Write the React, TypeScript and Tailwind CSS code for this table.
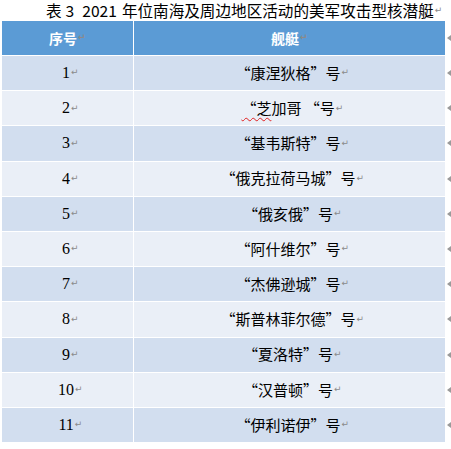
const rows: string[] = [
  "“康涅狄格”号",
  "__CHICAGO__",
  "“基韦斯特”号",
  "“俄克拉荷马城”号",
  "“俄亥俄”号",
  "“阿什维尔”号",
  "“杰佛逊城”号",
  "“斯普林菲尔德”号",
  "“夏洛特”号",
  "“汉普顿”号",
  "“伊利诺伊”号",
];

const cjk = "font-['Noto_Sans_CJK_SC',sans-serif]";

function Mark() {
  return <span className="ml-[1px] font-['DejaVu_Sans',sans-serif] text-[9px] text-[#8a8a8a]">↵</span>;
}

function RowEnd() {
  return (
    <div className="flex w-[5px] items-center justify-end">
      <svg width="4" height="6" viewBox="0 0 4 6">
        <path d="M4 0 L0 3 L4 6 Z" fill="#9a9a9a" />
      </svg>
    </div>
  );
}

export default function App() {
  return (
    <div className="h-[449px] w-[451px] overflow-hidden bg-white">
      <div className={`flex h-[21px] items-center whitespace-nowrap pl-[46px] text-[15.6px] leading-none text-black ${cjk}`}>
        <span>表</span>
        <span className="ml-[4px]">3</span>
        <span className="ml-[8px]">2021</span>
        <span className="ml-[5px]">年位南海及周边地区活动的美军攻击型核潜艇</span>
        <Mark />
      </div>
      <div className="flex flex-col gap-px pl-[2px]">
        <div className="flex h-[34px] gap-px">
          <div className={`flex w-[131px] items-center justify-center bg-[#5b9bd5] text-[14px] font-bold text-white ${cjk}`}>
            序号
            <Mark />
          </div>
          <div className={`flex w-[312px] items-center justify-center bg-[#5b9bd5] text-[14px] font-bold text-white ${cjk}`}>
            舰艇
            <Mark />
          </div>
          <RowEnd />
        </div>
        {rows.map((name, i) => {
          const bg = i % 2 === 0 ? "bg-[#d2deef]" : "bg-[#eaeff7]";
          return (
            <div key={i} className="flex h-[34.2px] gap-px">
              <div className={`flex w-[131px] items-center justify-center pl-[6px] ${bg} font-['Liberation_Serif',serif] text-[16px] text-black`}>
                {i + 1}
                <Mark />
              </div>
              <div className={`flex w-[312px] items-center justify-center pl-[6px] ${bg} text-[15px] text-black ${cjk}`}>
                {name === "__CHICAGO__" ? (
                  <>
                    <span className="underline decoration-[#e02020] decoration-wavy decoration-1 underline-offset-[3px]">“芝</span>
                    加哥 “号
                  </>
                ) : (
                  name
                )}
                <Mark />
              </div>
              <RowEnd />
            </div>
          );
        })}
      </div>
    </div>
  );
}
